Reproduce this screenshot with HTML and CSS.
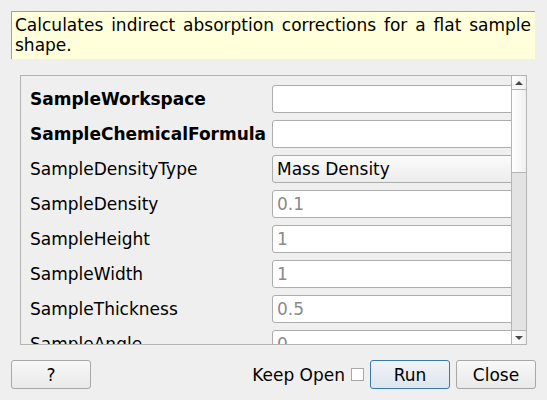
FILE: index.html
```html
<!DOCTYPE html>
<html>
<head>
<meta charset="utf-8">
<link rel="stylesheet" href="styles.css">
</head>
<body>
<div class="dialog">
  <div class="desc">Calculates indirect absorption corrections for a flat sample shape.</div>
  <div class="frame">
    <div class="viewport">
      <div class="rows">
        <div class="row"><span class="label bold">SampleWorkspace</span><span class="input"></span></div>
        <div class="row"><span class="label bold">SampleChemicalFormula</span><span class="input"></span></div>
        <div class="row"><span class="label">SampleDensityType</span><span class="input combo">Mass Density</span></div>
        <div class="row"><span class="label">SampleDensity</span><span class="input ph">0.1</span></div>
        <div class="row"><span class="label">SampleHeight</span><span class="input ph">1</span></div>
        <div class="row"><span class="label">SampleWidth</span><span class="input ph">1</span></div>
        <div class="row"><span class="label">SampleThickness</span><span class="input ph">0.5</span></div>
        <div class="row"><span class="label">SampleAngle</span><span class="input ph">0</span></div>
      </div>
    </div>
    <div class="scrollbar">
      <div class="sb-btn sb-up"><span class="arrow-up"></span></div>
      <div class="sb-handle"></div>
      <div class="sb-track"></div>
      <div class="sb-btn sb-down"><span class="arrow-down"></span></div>
    </div>
  </div>
  <div class="buttons">
    <button class="btn">?</button>
    <span class="spacer"></span>
    <span class="keep">Keep Open</span>
    <span class="check"></span>
    <button class="btn default">Run</button>
    <button class="btn">Close</button>
  </div>
</div>
</body>
</html>
```
FILE: styles.css
```css
html, body {
  margin: 0;
  padding: 0;
  background: #efefef;
}
body {
  font-family: "DejaVu Sans", sans-serif;
  font-size: 17px;
  color: #000;
  width: 547px;
  height: 400px;
  overflow: hidden;
}
.dialog {
  display: flex;
  flex-direction: column;
  padding: 11px 12px 0 11px;
}
.desc {
  background: #ffffdc;
  border-top: 1px solid #a0a0a0;
  border-left: 1px solid #a0a0a0;
  box-sizing: border-box;
  height: 48px;
  padding: 3px 4px 4px 3px;
  line-height: 20px;
  text-align: justify;
}
.frame {
  margin: 16px 8px 0 9px;
  height: 270px;
  box-sizing: border-box;
  border: 1px solid #b4b4b4;
  display: flex;
}
.viewport {
  flex: 1;
  overflow: hidden;
}
.rows {
  padding: 9px 0 0 9px;
  display: flex;
  flex-direction: column;
  gap: 7px;
}
.row {
  display: flex;
  align-items: center;
  height: 28px;
}
.label {
  width: 242px;
  flex: none;
  line-height: 28px;
  white-space: nowrap;
}
.bold {
  font-weight: bold;
}
.input {
  flex: none;
  width: 260px;
  height: 28px;
  box-sizing: border-box;
  border: 1px solid #adadad;
  border-radius: 3px;
  background: #fff;
  padding-left: 4px;
  line-height: 26px;
}
.input.ph {
  color: #8a8a8a;
}
.input.combo {
  background: linear-gradient(#fbfbfb, #ececec);
}
.scrollbar {
  width: 14px;
  flex: none;
  border-left: 1px solid #b4b4b4;
  display: flex;
  flex-direction: column;
}
.sb-btn {
  height: 13px;
  background: linear-gradient(to right, #ffffff, #f0f0f0);
  display: flex;
  align-items: center;
  justify-content: center;
}
.sb-up {
  border-bottom: 1px solid #b4b4b4;
}
.sb-down {
  border-top: 1px solid #b4b4b4;
}
.sb-handle {
  height: 82px;
  border-bottom: 1px solid #b4b4b4;
  background: linear-gradient(to right, #ffffff, #f0f0f0);
}
.sb-track {
  flex: 1;
  background: #e3e3e3;
}
.arrow-up {
  width: 0;
  height: 0;
  border-left: 4px solid transparent;
  border-right: 4px solid transparent;
  border-bottom: 4px solid #4a4a4a;
}
.arrow-down {
  width: 0;
  height: 0;
  border-left: 4px solid transparent;
  border-right: 4px solid transparent;
  border-top: 4px solid #4a4a4a;
}
.buttons {
  display: flex;
  align-items: center;
  margin-top: 15px;
  margin-right: -1px;
  height: 29px;
}
.spacer {
  flex: 1;
}
.btn {
  font-family: "DejaVu Sans", sans-serif;
  font-size: 17px;
  color: #000;
  width: 80px;
  height: 29px;
  box-sizing: border-box;
  border: 1px solid #a8a8a8;
  border-radius: 3px;
  background: linear-gradient(#f8f8f8, #e9e9e9);
  padding: 0;
  margin: 0;
}
.btn.default {
  border-color: #3a78b0;
  background: linear-gradient(#f1f4f8, #dde5ee);
  margin-right: 6px;
}
.keep {
  white-space: nowrap;
}
.check {
  width: 13px;
  height: 13px;
  box-sizing: border-box;
  border: 1px solid #a8a8a8;
  background: #fff;
  margin-left: 6px;
  margin-right: 6px;
}
```
